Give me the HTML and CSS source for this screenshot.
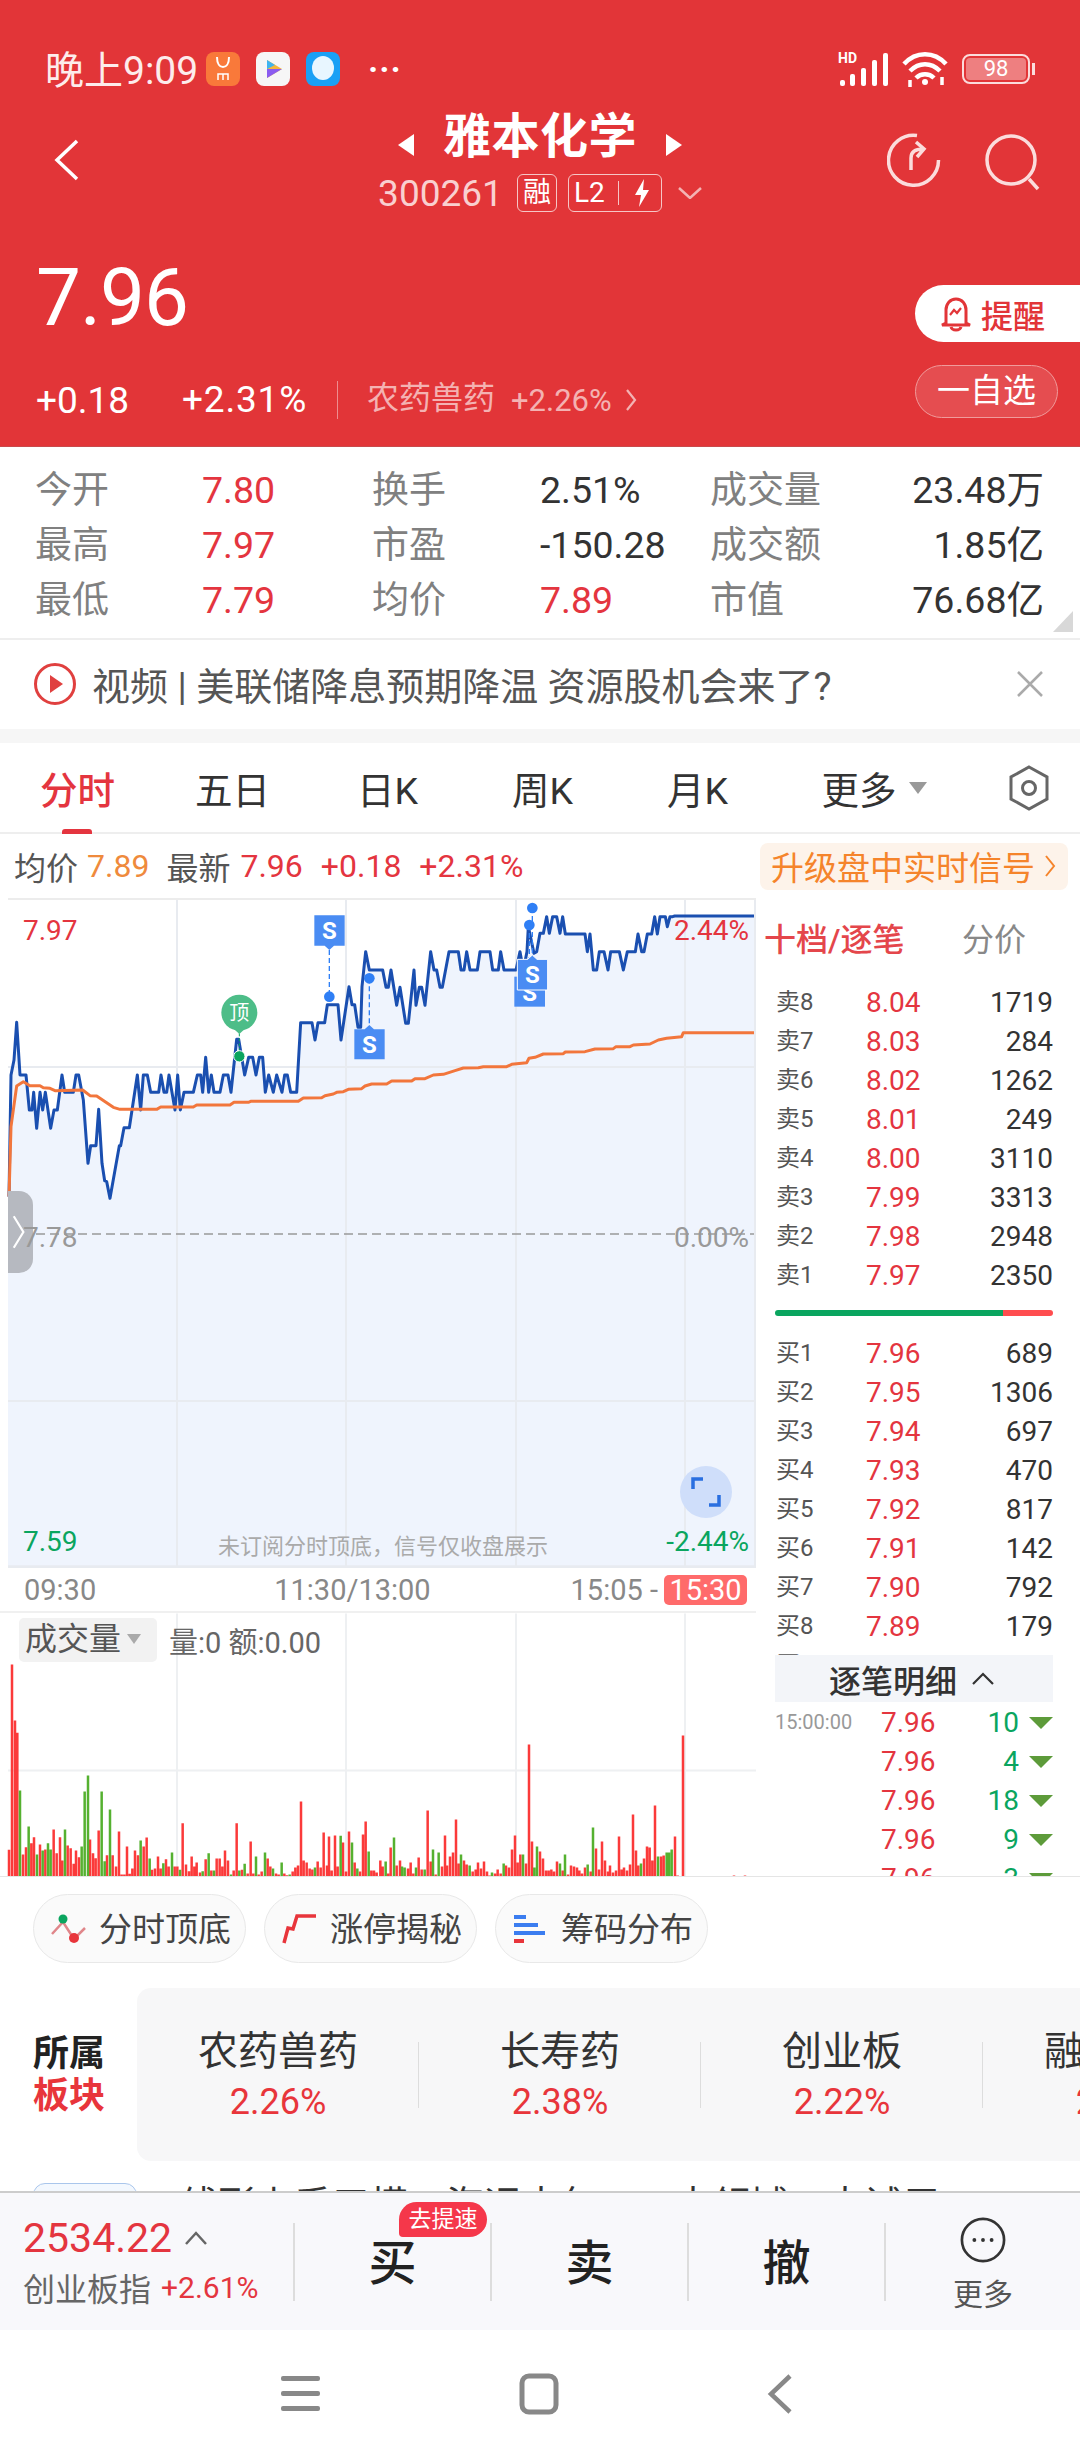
FILE: index.html
```html
<!DOCTYPE html>
<html lang="zh-CN">
<head>
    <meta charset="UTF-8">
    <meta name="viewport" content="width=device-width, initial-scale=1.0">
    <title>雅本化学 300261</title>
    <link rel="stylesheet" href="styles.css">
</head>
<body>
    <header class="top">
        <div class="status">
            <span class="clock">晚上9:09</span>
            <span class="app app-mi"><svg viewBox="0 0 34 34" width="34" height="34"><path d="M11 5c0 7 3 10 6 10s6-3 6-10" fill="none" stroke="#fff" stroke-width="2"/><path d="M12 28v-6h10v6M17 22v6" fill="none" stroke="#fff" stroke-width="1.5"/></svg></span>
            <span class="app app-play"><svg viewBox="0 0 34 34" width="34" height="34"><path d="M11 8l15 9-15 9z" fill="#f5b63d"/><path d="M11 17l15 0-15 9z" fill="#8a5cf0"/><path d="M11 8l8 5-8 4z" fill="#3fb4f0"/></svg></span>
            <span class="app app-blue"><svg viewBox="0 0 34 34" width="34" height="34"><ellipse cx="17" cy="16" rx="11" ry="12" fill="#e8f6ff"/></svg></span>
            <span class="status-dots">···</span>
            <span class="status-right">
                <svg viewBox="0 0 50 40" width="50" height="40"><text x="0" y="14" class="hd">HD</text><g fill="#fff"><rect x="2" y="31" width="5" height="6" rx="2"/><rect x="12" y="25" width="5" height="12" rx="2"/><rect x="23" y="19" width="5" height="18" rx="2"/><rect x="34" y="11" width="5" height="26" rx="2"/><rect x="45" y="4" width="5" height="33" rx="2"/></g></svg>
                <svg viewBox="0 0 48 40" width="48" height="40" fill="none" stroke="#fff" stroke-width="4.5"><path d="M3 15c12-13 30-13 42 0M9 22c9-9 21-9 30 0M15 29c5-5 13-5 18 0"/><circle cx="24" cy="33" r="3" fill="#fff" stroke="none"/><path d="M9 31v7M41 28v8" stroke-width="3.5"/></svg>
                <span class="battery"><span class="battery-level">98</span></span>
            </span>
        </div>
        <div class="titlebar">
            <svg class="back" viewBox="0 0 28 44" width="28" height="44" fill="none" stroke="#fff" stroke-width="3.5"><path d="M25 3L5 22l20 19"/></svg>
            <div class="title-wrap">
                <div class="title-row">
                    <i class="tri tri-l"></i>
                    <span class="name">雅本化学</span>
                    <i class="tri tri-r"></i>
                </div>
                <div class="code-row">
                    <span class="code">300261</span>
                    <span class="tag tag-rong">融</span>
                    <span class="tag tag-l2">L2<i class="tag-line"></i><svg viewBox="0 0 18 30" width="18" height="30"><path d="M11 1L2 17h6l-2 12 10-17h-6z" fill="#fff"/></svg></span>
                    <svg viewBox="0 0 24 12" width="24" height="12" fill="none" stroke="#f3b3b3" stroke-width="2.5"><path d="M1 1l11 10L23 1"/></svg>
                </div>
            </div>
            <div class="title-icons">
                <svg viewBox="0 0 54 54" width="54" height="54" fill="none" stroke="#fbdcdc" stroke-width="3.5"><path d="M30 2.5A25 25 0 1 0 51.5 27"/><path d="M24 37V25c0-6 4-9 12-9M29 9l8 7-7 8"/></svg>
                <svg viewBox="0 0 56 58" width="56" height="58" fill="none" stroke="#fbdcdc" stroke-width="3.5"><circle cx="26" cy="27" r="24"/><path d="M44 46l9 10"/></svg>
            </div>
        </div>
        <div class="quote">
            <div class="quote-left">
                <div class="price">7.96</div>
                <div class="change">
                    <span class="chg-a">+0.18</span>
                    <span class="chg-b">+2.31%</span>
                    <span class="chg-sector">农药兽药</span>
                    <span class="chg-pct">+2.26%</span>
                    <svg viewBox="0 0 12 24" width="12" height="24" fill="none" stroke="#f3b3b3" stroke-width="2.2"><path d="M2 2l8 10L2 22"/></svg>
                </div>
            </div>
            <div class="quote-right">
                <div class="remind">
                    <svg viewBox="0 0 34 36" width="34" height="36" fill="none" stroke="#e23538" stroke-width="3"><path d="M7 27V14C7 8 11 3 17 3s10 5 10 11v13l4 2H3zM12 31c1 4 9 4 10 0"/><path d="M11 19l4-5 3 3 4-5" stroke-width="2.2"/></svg>
                    提醒
                </div>
                <div class="watch">一自选</div>
            </div>
        </div>
    </header>

    <section class="stats">
        <span class="lbl">今开</span><span class="up">7.80</span><span class="lbl">换手</span><span>2.51%</span><span class="lbl">成交量</span><span class="end">23.48万</span>
        <span class="lbl">最高</span><span class="up">7.97</span><span class="lbl">市盈</span><span>-150.28</span><span class="lbl">成交额</span><span class="end">1.85亿</span>
        <span class="lbl">最低</span><span class="up">7.79</span><span class="lbl">均价</span><span class="up">7.89</span><span class="lbl">市值</span><span class="end">76.68亿</span>
        <i class="corner"></i>
    </section>

    <section class="news">
        <svg viewBox="0 0 44 44" width="44" height="44"><circle cx="22" cy="22" r="19.5" fill="none" stroke="#e0403f" stroke-width="3"/><path d="M17 13l13 9-13 9z" fill="#e0403f"/></svg>
        <span class="news-text">视频 | 美联储降息预期降温 资源股机会来了?</span>
        <svg class="news-close" viewBox="0 0 28 28" width="28" height="28" fill="none" stroke="#aaa" stroke-width="2.5"><path d="M2 2l24 24M26 2L2 26"/></svg>
    </section>
    <div class="band"></div>

    <nav class="tabs">
        <span class="tab tab-on">分时</span>
        <span class="tab">五日</span>
        <span class="tab">日K</span>
        <span class="tab">周K</span>
        <span class="tab">月K</span>
        <span class="tab">更多<i class="tab-caret"></i></span>
        <svg class="tab-gear" viewBox="0 0 42 46" width="42" height="46" fill="none" stroke="#666" stroke-width="3"><path d="M21 2l18 10v22L21 44 3 34V12z"/><circle cx="21" cy="23" r="6.5"/></svg>
    </nav>

    <div class="info">
        <span class="info-lbl">均价</span>
        <span class="info-avg">7.89</span>
        <span class="info-lbl info-new">最新</span>
        <span class="up">7.96</span>
        <span class="up">+0.18</span>
        <span class="up">+2.31%</span>
        <span class="signal">升级盘中实时信号<svg viewBox="0 0 12 24" width="12" height="24" fill="none" stroke="#f5842b" stroke-width="2"><path d="M2 2l8 10L2 22"/></svg></span>
    </div>

    <main class="main">
        <div class="charts">
            <div class="price-chart">
                <svg class="chart-svg" viewBox="0 0 2268 2004">
                    <path id="area" fill="#eff4fd"/>
                    <g stroke="#e8ebf0" stroke-width="6">
                        <path d="M531 0V2004M1038 0V2004M1548 0V2004M2055 0V2004M24 501H2268M24 1503H2268"/>
                    </g>
                    <path d="M24 1002H2268" stroke="#999" stroke-width="5" stroke-dasharray="27 15"/>
                    <path id="price-line" fill="none" stroke="#1a4fb0" stroke-width="9" stroke-linejoin="round"/>
                    <path id="avg-line" fill="none" stroke="#f2763c" stroke-width="9" stroke-linejoin="round"/>

                    <path d="M718 400V468" stroke="#0aa55f" stroke-width="3" stroke-dasharray="9 6"/>
                    <circle cx="718" cy="338" r="54" fill="#4dbd88"/>
                    <path d="M696 382h44l-22 20z" fill="#4dbd88"/>
                    <text x="718" y="360" class="pin-text">顶</text>
                    <circle cx="718" cy="469" r="17" fill="#0aa55f" stroke="#fff" stroke-width="3"/>

                    <path d="M988 150V290M1108 235V378M1588 75V230M1597 24V165" stroke="#2f7ff5" stroke-width="4" stroke-dasharray="15 9"/>
                    <circle cx="988" cy="290" r="16" fill="#2f7ff5"/>
                    <circle cx="1108" cy="235" r="16" fill="#2f7ff5"/>
                    <circle cx="1588" cy="75" r="16" fill="#2f7ff5"/>
                    <circle cx="1597" cy="24" r="16" fill="#2f7ff5"/>

                    <g class="flag"><path d="M943 46h91v91h-32l-14 13-14-13h-31z"/><text x="988" y="116">S</text></g>
                    <g class="flag"><path d="M1063 388h31l14-13 14 13h32v90h-91z"/><text x="1108" y="458">S</text></g>
                    <g class="flag"><path d="M1543 230h92v90h-92z"/><text x="1589" y="304">S</text></g>
                    <g class="flag flag-top"><path d="M1552 178h31l14-13 14 13h32v92h-91z"/><text x="1597" y="250">S</text></g>

                    <path d="M24 2000H2268" stroke="#e8ebf0" stroke-width="8"/>
                    <path d="M2265 0V2004" stroke="#e8ebf0" stroke-width="6"/>
                </svg>
                <span class="handle"><svg viewBox="0 0 16 40" width="14" height="38" fill="none" stroke="#fff" stroke-width="2.5"><path d="M2 2l11 18L2 38"/></svg></span>
                <span class="tag-price tp-top">7.97</span>
                <span class="tag-pct tp-top">2.44%</span>
                <span class="tag-price tp-mid">7.78</span>
                <span class="tag-pct tp-mid">0.00%</span>
                <span class="tag-price tp-low">7.59</span>
                <span class="tag-pct tp-low">-2.44%</span>
                <span class="chart-note">未订阅分时顶底，信号仅收盘展示</span>
                <span class="expand"><svg viewBox="0 0 30 30" width="30" height="30" fill="none" stroke="#2a6fe0" stroke-width="3.5"><path d="M2 12V2h10M28 18v10H18"/></svg></span>
            </div>
            <div class="axis">
                <span>09:30</span>
                <span class="axis-mid">11:30/13:00</span>
                <span class="axis-end">15:05 -</span>
                <span class="axis-badge">15:30</span>
            </div>
            <div class="volume">
                <svg class="chart-svg" viewBox="0 -111 2268 789">
                    <path d="M531 -111V678M1038 -111V678M1548 -111V678M2055 -111V678M24 360H2268" stroke="#eef0f2" stroke-width="6"/>
                    <path id="red-bars" stroke="#fb3a3a" stroke-width="7.5" fill="none"/>
                    <path id="green-bars" stroke="#55b130" stroke-width="7.5" fill="none"/>
                </svg>
                <div class="vol-head">
                    <span class="vol-select">成交量<i class="vol-caret"></i></span>
                    <span class="vol-text">量:0 额:0.00</span>
                </div>
            </div>
        </div>

        <aside class="book">
            <div class="book-tabs">
                <span class="book-on">十档/逐笔</span>
                <span class="book-off">分价</span>
            </div>
            <div class="row"><span class="row-lbl">卖8</span><span class="up">8.04</span><span class="qty">1719</span></div>
            <div class="row"><span class="row-lbl">卖7</span><span class="up">8.03</span><span class="qty">284</span></div>
            <div class="row"><span class="row-lbl">卖6</span><span class="up">8.02</span><span class="qty">1262</span></div>
            <div class="row"><span class="row-lbl">卖5</span><span class="up">8.01</span><span class="qty">249</span></div>
            <div class="row"><span class="row-lbl">卖4</span><span class="up">8.00</span><span class="qty">3110</span></div>
            <div class="row"><span class="row-lbl">卖3</span><span class="up">7.99</span><span class="qty">3313</span></div>
            <div class="row"><span class="row-lbl">卖2</span><span class="up">7.98</span><span class="qty">2948</span></div>
            <div class="row"><span class="row-lbl">卖1</span><span class="up">7.97</span><span class="qty">2350</span></div>
            <div class="ratio"><i class="ratio-green"></i><i class="ratio-red"></i></div>
            <div class="buys">
                <div class="row"><span class="row-lbl">买1</span><span class="up">7.96</span><span class="qty">689</span></div>
                <div class="row"><span class="row-lbl">买2</span><span class="up">7.95</span><span class="qty">1306</span></div>
                <div class="row"><span class="row-lbl">买3</span><span class="up">7.94</span><span class="qty">697</span></div>
                <div class="row"><span class="row-lbl">买4</span><span class="up">7.93</span><span class="qty">470</span></div>
                <div class="row"><span class="row-lbl">买5</span><span class="up">7.92</span><span class="qty">817</span></div>
                <div class="row"><span class="row-lbl">买6</span><span class="up">7.91</span><span class="qty">142</span></div>
                <div class="row"><span class="row-lbl">买7</span><span class="up">7.90</span><span class="qty">792</span></div>
                <div class="row"><span class="row-lbl">买8</span><span class="up">7.89</span><span class="qty">179</span></div>
                <div class="row"><span class="row-lbl">买9</span><span class="up">7.88</span><span class="qty">364</span></div>
            </div>
            <div class="detail-head">逐笔明细<svg viewBox="0 0 24 14" width="24" height="14" fill="none" stroke="#333" stroke-width="2.2"><path d="M2 12L12 2l10 10"/></svg></div>
            <div class="trade"><span class="trade-time">15:00:00</span><span class="up">7.96</span><span class="trade-qty">10</span><i class="trade-tri"></i></div>
            <div class="trade"><span class="trade-time"></span><span class="up">7.96</span><span class="trade-qty">4</span><i class="trade-tri"></i></div>
            <div class="trade"><span class="trade-time"></span><span class="up">7.96</span><span class="trade-qty">18</span><i class="trade-tri"></i></div>
            <div class="trade"><span class="trade-time"></span><span class="up">7.96</span><span class="trade-qty">9</span><i class="trade-tri"></i></div>
            <div class="trade"><span class="trade-time"></span><span class="up">7.96</span><span class="trade-qty">3</span><i class="trade-tri"></i></div>
        </aside>
    </main>

    <div class="chips">
        <span class="chip">
            <svg viewBox="0 0 36 30" width="36" height="30" fill="none"><path d="M1 20L12 8l11 17 11-11" stroke="#e0868a" stroke-width="2.5"/><circle cx="12" cy="5" r="4.5" fill="#0aa55f"/><circle cx="23" cy="24" r="5" fill="#e8353b"/></svg>
            <span class="chip-text">分时顶底</span>
        </span>
        <span class="chip">
            <svg viewBox="0 0 36 30" width="36" height="30" fill="none" stroke="#e8353b" stroke-width="3.5"><path d="M2 29L6 14l5 1 4-13h19"/></svg>
            <span class="chip-text">涨停揭秘</span>
        </span>
        <span class="chip">
            <svg viewBox="0 0 36 30" width="36" height="30"><rect x="1" y="1" width="12" height="4" fill="#3b7df0"/><rect x="1" y="9" width="24" height="4" fill="#3b7df0"/><rect x="1" y="17" width="31" height="4" fill="#3b7df0"/><rect x="1" y="25" width="10" height="4" fill="#e8353b"/></svg>
            <span class="chip-text">筹码分布</span>
        </span>
    </div>

    <section class="sector">
        <div class="sector-title"><span>所属</span><span class="up">板块</span></div>
        <div class="sector-list">
            <div class="sector-item"><span class="sector-name">农药兽药</span><span class="sector-pct">2.26%</span></div>
            <div class="sector-item"><span class="sector-name">长寿药</span><span class="sector-pct">2.38%</span></div>
            <div class="sector-item"><span class="sector-name">创业板</span><span class="sector-pct">2.22%</span></div>
            <div class="sector-item"><span class="sector-name">融资融券</span><span class="sector-pct">2.05%</span></div>
        </div>
    </section>

    <div class="peek">
        <span class="peek-thumb"></span>
        <span class="peek-text">线形上手五模：海运大包，一大领域一大试用</span>
    </div>

    <section class="bar">
        <div class="index">
            <div class="index-top"><span class="index-num">2534.22</span><svg viewBox="0 0 24 14" width="24" height="14" fill="none" stroke="#666" stroke-width="2.5"><path d="M2 13L12 2l10 11"/></svg></div>
            <div class="index-low"><span class="index-name">创业板指</span><span class="index-pct">+2.61%</span></div>
        </div>
        <div class="trade-btn"><span class="trade-glyph">买</span><span class="speed">去提速</span></div>
        <div class="trade-btn"><span class="trade-glyph">卖</span></div>
        <div class="trade-btn"><span class="trade-glyph">撤</span></div>
        <div class="more">
            <svg viewBox="0 0 48 48" width="46" height="46" fill="none"><circle cx="24" cy="24" r="22" stroke="#333" stroke-width="2.8"/><circle cx="15" cy="24" r="2" fill="#333"/><circle cx="24" cy="24" r="2" fill="#333"/><circle cx="33" cy="24" r="2" fill="#333"/></svg>
            <span>更多</span>
        </div>
    </section>

    <footer class="nav">
        <svg viewBox="0 0 40 38" width="40" height="38" fill="#888"><rect y="1" width="39" height="5" rx="2"/><rect y="16" width="39" height="5" rx="2"/><rect y="31" width="39" height="5" rx="2"/></svg>
        <svg class="nav-home" viewBox="0 0 40 42" width="40" height="42" fill="none" stroke="#888" stroke-width="5"><rect x="3" y="3" width="34" height="36" rx="7"/></svg>
        <svg class="nav-back" viewBox="0 0 26 42" width="26" height="42" fill="none" stroke="#888" stroke-width="4.5"><path d="M23 3L4 21l19 18"/></svg>
    </footer>

    <script src="chart.js"></script>
</body>
</html>
```

FILE: styles.css
```css
* {
    box-sizing: border-box;
}

body {
    font-family: Roboto, "Noto Sans CJK SC", sans-serif;
    background-color: #fff;
    color: #333;
    width: 1080px;
    height: 2460px;
    margin: 0;
    overflow: hidden;
    display: flex;
    flex-direction: column;
}

i {
    display: block;
}

.up {
    color: #e4353f;
}

/* red header */
.top {
    height: 447px;
    flex: none;
    background-color: #e23538;
    color: #fff;
    border-bottom: 1px solid #c9494b;
}

.status {
    height: 92px;
    padding: 46px 50px 0 45px;
    display: flex;
    align-items: center;
}

.clock {
    font-size: 39px;
    width: 161px;
    margin-top: -4px;
    color: #fdecec;
}

.app {
    width: 34px;
    height: 34px;
    border-radius: 8px;
    margin-right: 16px;
    display: block;
}

.app svg {
    display: block;
}

.app-mi {
    background-color: #f9793a;
}

.app-play {
    background-color: #f6f6f6;
}

.app-blue {
    background-color: #1aa0f5;
}

.status-dots {
    font-size: 34px;
    font-weight: 700;
    margin-left: 12px;
    letter-spacing: 1px;
}

.status-right {
    margin-left: auto;
    display: flex;
    align-items: center;
    gap: 13px;
}

.status-right svg {
    display: block;
}

.hd {
    font-family: Roboto, sans-serif;
    font-size: 14px;
    font-weight: 700;
    fill: #fff;
}

.battery {
    width: 68px;
    height: 30px;
    border: 2.5px solid #fbdcdc;
    border-radius: 8px;
    padding: 2px;
    position: relative;
}

.battery::after {
    content: "";
    position: absolute;
    right: -7px;
    top: 7px;
    width: 3px;
    height: 12px;
    background-color: #fbdcdc;
}

.battery-level {
    display: block;
    height: 100%;
    background-color: #ee7f80;
    border-radius: 4px;
    font-size: 22px;
    line-height: 21px;
    text-align: center;
}

.titlebar {
    height: 134px;
    display: grid;
    grid-template-columns: 1fr auto 1fr;
}

.back {
    margin: 46px 0 0 52px;
}

.title-wrap {
    display: flex;
    flex-direction: column;
    align-items: center;
}

.title-row {
    margin-top: 17px;
    height: 56px;
    display: flex;
    align-items: center;
    gap: 29px;
}

.name {
    font-size: 48px;
    font-weight: 700;
    line-height: 56px;
    letter-spacing: 0.5px;
}

.tri {
    width: 0;
    height: 0;
    margin-top: 16px;
    border-top: 11px solid transparent;
    border-bottom: 11px solid transparent;
}

.tri-l {
    border-right: 16px solid #fff;
}

.tri-r {
    border-left: 16px solid #fff;
}

.code-row {
    margin-top: 9px;
    height: 38px;
    display: flex;
    align-items: center;
}

.code {
    font-size: 37px;
    color: #f9d0d0;
    margin-right: 14px;
}

.tag {
    height: 38px;
    border: 1.5px solid #f6c6c6;
    border-radius: 6px;
    font-size: 28px;
    line-height: 34px;
    display: flex;
    align-items: center;
}

.tag-rong {
    width: 40px;
    justify-content: center;
    margin-right: 11px;
}

.tag-l2 {
    width: 94px;
    padding-left: 5px;
    margin-right: 16px;
}

.tag-line {
    width: 1.5px;
    height: 24px;
    background-color: #f6c6c6;
    margin: 0 14px 0 13px;
}

.title-icons {
    display: flex;
    justify-content: flex-end;
    gap: 44px;
    padding: 41px 39px 0 0;
    align-items: flex-start;
}

.quote {
    height: 220px;
    display: flex;
    justify-content: space-between;
}

.quote-left {
    padding: 32px 0 0 36px;
}

.price {
    font-size: 80px;
    line-height: 80px;
    font-weight: 400;
    height: 80px;
    letter-spacing: -1px;
}

.change {
    margin-top: 43px;
    height: 38px;
    display: flex;
    align-items: center;
}

.chg-a {
    font-size: 37px;
    width: 146px;
}

.chg-b {
    font-size: 37px;
    letter-spacing: 0.8px;
    width: 156px;
    border-right: 1.5px solid #ee8d8f;
    line-height: 38px;
}

.chg-sector {
    font-size: 32px;
    line-height: 34px;
    margin-top: -4px;
    color: #f4b2b2;
    margin-left: 29px;
    width: 144px;
}

.chg-pct {
    font-size: 31px;
    color: #f4b2b2;
    width: 114px;
}

.quote-right {
    padding-top: 59px;
    display: flex;
    flex-direction: column;
    align-items: flex-end;
}

.remind {
    width: 165px;
    height: 57px;
    background-color: #fff;
    border-radius: 29px 0 0 29px;
    color: #e23538;
    font-size: 32px;
    font-weight: 500;
    display: flex;
    align-items: center;
    gap: 8px;
    padding-left: 24px;
}

.watch {
    width: 143px;
    height: 53px;
    margin: 23px 22px 0 0;
    border: 1.5px solid #f09b9b;
    border-radius: 27px;
    background-color: rgba(255, 255, 255, 0.12);
    font-size: 33px;
    line-height: 50px;
    text-align: center;
}

/* stats */
.stats {
    height: 193px;
    flex: none;
    padding: 16px 36px 0 35px;
    border-bottom: 2px solid #eee;
    display: grid;
    grid-template-columns: 167px 170px 168px 170px auto 1fr;
    grid-auto-rows: 55px;
    align-items: center;
    font-size: 37.5px;
    line-height: 55px;
    color: #333;
    position: relative;
}

.lbl {
    color: #808080;
    font-size: 37px;
}

.end {
    text-align: right;
}

.corner {
    position: absolute;
    right: 7px;
    bottom: 6px;
    width: 20px;
    height: 21px;
    background-color: #d8d8d8;
    clip-path: polygon(100% 0, 100% 100%, 0 100%);
}

/* news */
.news {
    height: 89px;
    flex: none;
    padding: 0 36px 2px 33px;
    display: flex;
    align-items: center;
}

.news-text {
    font-size: 38px;
    color: #555;
    margin-left: 15px;
}

.news-close {
    margin-left: auto;
}

.band {
    height: 14px;
    flex: none;
    background-color: #f6f6f6;
}

/* tabs */
.tabs {
    height: 91px;
    flex: none;
    display: grid;
    grid-template-columns: repeat(6, 155px) 1fr;
    align-items: center;
    border-bottom: 2px solid #eee;
    font-size: 37.5px;
    color: #333;
    position: relative;
}

.tab {
    text-align: center;
    display: flex;
    align-items: center;
    justify-content: center;
}

.tab-on {
    color: #e4353f;
    font-weight: 500;
}

.tab-on::after {
    content: "";
    position: absolute;
    left: 62px;
    bottom: -2px;
    width: 30px;
    height: 5px;
    background-color: #e4353f;
    border-radius: 3px 3px 0 0;
}

.tab:nth-child(6) {
    padding-left: 13px;
}

.tab-caret {
    width: 0;
    height: 0;
    margin: 0 -30px 0 12px;
    border-left: 9px solid transparent;
    border-right: 9px solid transparent;
    border-top: 12px solid #999;
}

.tab-gear {
    margin-left: 78px;
}

/* info line */
.info {
    height: 64px;
    flex: none;
    padding: 0 12px 0 14px;
    display: flex;
    align-items: center;
    font-size: 32px;
}

.info-lbl {
    color: #555;
}

.info-avg {
    color: #ef8a3c;
    margin: 0 17px 0 9px;
}

.info-new {
    margin-right: 10px;
}

.info .up {
    margin-right: 18px;
}

.signal {
    margin-left: auto;
    width: 308px;
    height: 47px;
    background-color: #fdf3ea;
    border-radius: 8px;
    color: #f5842b;
    font-size: 33px;
    display: flex;
    align-items: center;
    gap: 9px;
    padding-left: 11px;
}

/* charts + order book */
.main {
    height: 979px;
    flex: none;
    display: flex;
    overflow: hidden;
    border-bottom: 1px solid #e5e5e5;
}

.charts {
    width: 756px;
    flex: none;
}

.price-chart {
    height: 670px;
    border-top: 2px solid #ececec;
    margin-left: 8px;
    position: relative;
}

.chart-svg {
    position: absolute;
    left: -8px;
    top: 0;
    width: 756px;
    height: 100%;
    display: block;
}

.pin-text {
    font-size: 60px;
    fill: #fff;
    text-anchor: middle;
    font-family: "Noto Sans CJK SC", sans-serif;
}

.flag path {
    fill: #4a8cf3;
}

.flag text {
    fill: #fff;
    font-size: 72px;
    font-weight: 700;
    font-family: Roboto, sans-serif;
    text-anchor: middle;
}

.flag-top path {
    stroke: #fff;
    stroke-width: 3;
}

.tag-price,
.tag-pct {
    position: absolute;
    font-size: 28px;
    line-height: 32px;
}

.tag-price {
    left: 15px;
}

.tag-pct {
    right: 7px;
}

.tp-top {
    top: 15px;
    color: #e4353f;
}

.tp-mid {
    top: 322px;
    color: #999;
}

.tp-low {
    top: 626px;
    color: #0aa55f;
}

.chart-note {
    position: absolute;
    left: 210px;
    top: 633px;
    font-size: 22px;
    line-height: 28px;
    color: #aaa;
}

.handle {
    position: absolute;
    left: 0;
    top: 291px;
    width: 25px;
    height: 82px;
    background-color: #b6b9c0;
    border-radius: 0 14px 14px 0;
    display: flex;
    align-items: center;
    padding-left: 4px;
}

.expand {
    position: absolute;
    left: 672px;
    top: 566px;
    width: 52px;
    height: 52px;
    border-radius: 50%;
    background-color: #cfdefa;
    display: flex;
    align-items: center;
    justify-content: center;
}

.axis {
    height: 45px;
    padding: 0 9px 0 24px;
    display: flex;
    align-items: center;
    font-size: 29px;
    color: #888;
    border-bottom: 2px solid #f0f0f0;
}

.axis-mid {
    margin-left: 178px;
}

.axis-end {
    margin-left: auto;
}

.axis-badge {
    margin-left: 6px;
    width: 83px;
    height: 30px;
    background-color: #ff6b6b;
    border-radius: 5px;
    color: #fff;
    line-height: 30px;
    text-align: center;
}

.volume {
    height: 264px;
    position: relative;
}

.volume .chart-svg {
    left: 0;
}

.vol-head {
    position: absolute;
    left: 19px;
    top: 5px;
    display: flex;
    align-items: center;
    gap: 12px;
}

.vol-select {
    width: 138px;
    height: 44px;
    background-color: #f2f2f2;
    border-radius: 5px;
    font-size: 32px;
    line-height: 40px;
    color: #555;
    display: flex;
    align-items: center;
    padding: 0 0 3px 6px;
}

.vol-caret {
    width: 0;
    height: 0;
    margin-left: 6px;
    border-left: 7px solid transparent;
    border-right: 7px solid transparent;
    border-top: 10px solid #aaa;
}

.vol-text {
    font-size: 29px;
    color: #666;
}

.book {
    flex: 1;
    padding-left: 19px;
    overflow: hidden;
}

.book-tabs {
    height: 85px;
    margin-left: -11px;
    padding-top: 21px;
    display: flex;
    font-size: 32px;
    line-height: 42px;
}

.book-on {
    color: #e4464b;
    width: 198px;
    font-weight: 500;
}

.book-off {
    color: #888;
}

.row {
    height: 39px;
    width: 278px;
    display: grid;
    grid-template-columns: 91px 1fr auto;
    align-items: center;
    font-size: 28px;
    line-height: 39px;
}

.row-lbl {
    font-size: 24px;
    color: #555;
    padding-left: 1px;
}

.qty {
    color: #333;
    text-align: right;
}

.ratio {
    width: 278px;
    height: 6px;
    margin: 15px 0 18px;
    display: flex;
    border-radius: 3px;
    overflow: hidden;
}

.ratio-green {
    width: 228px;
    background-color: #0aa55f;
}

.ratio-red {
    flex: 1;
    background-color: #ff4d4f;
}

.buys {
    height: 321px;
    overflow: hidden;
}

.detail-head {
    width: 278px;
    height: 47px;
    background-color: #f3f5f9;
    color: #333;
    font-size: 32px;
    font-weight: 500;
    display: flex;
    align-items: center;
    justify-content: center;
    gap: 14px;
    padding-right: 4px;
}

.trade {
    height: 39px;
    width: 278px;
    display: grid;
    grid-template-columns: 106px 60px 1fr 26px;
    align-items: center;
    font-size: 28px;
    line-height: 39px;
}

.detail-head + .trade {
    margin-top: 1px;
}

.trade-time {
    font-size: 20px;
    color: #999;
}

.trade-qty {
    color: #0aa55f;
    text-align: right;
    padding-right: 8px;
}

.trade-tri {
    width: 0;
    height: 0;
    margin-left: 2px;
    border-left: 12px solid transparent;
    border-right: 12px solid transparent;
    border-top: 12px solid #5d9b3a;
}

/* shortcut chips */
.chips {
    margin-top: 17px;
    height: 69px;
    flex: none;
    padding-left: 33px;
    display: flex;
    gap: 18px;
}

.chip {
    width: 213px;
    height: 69px;
    border: 1.5px solid #e8e8e8;
    border-radius: 35px;
    background-color: #fafafa;
    color: #444;
    font-size: 33px;
    display: flex;
    align-items: center;
    gap: 12px;
    padding-left: 17px;
}

.chip-text {
    margin-top: -4px;
}

/* sector */
.sector {
    margin-top: 25px;
    height: 173px;
    flex: none;
    display: flex;
}

.sector-title {
    width: 137px;
    flex: none;
    padding-left: 33px;
    display: flex;
    flex-direction: column;
    justify-content: center;
    font-size: 36px;
    font-weight: 700;
    line-height: 42px;
    color: #222;
}

.sector-title .up {
    color: #e8353b;
}

.sector-list {
    flex: 1;
    display: flex;
    background-color: #f7f7f8;
    border-radius: 14px 0 0 14px;
    overflow: hidden;
}

.sector-item {
    width: 282px;
    flex: none;
    position: relative;
    display: flex;
    flex-direction: column;
    align-items: center;
    padding-top: 40px;
}

.sector-item::after {
    content: "";
    position: absolute;
    right: 0;
    top: 54px;
    width: 1.5px;
    height: 66px;
    background-color: #ddd;
}

.sector-name {
    font-size: 40px;
    line-height: 48px;
    color: #333;
}

.sector-pct {
    font-size: 36px;
    line-height: 40px;
    margin-top: 6px;
    color: #e8353b;
}

.peek {
    height: 30px;
    flex: none;
    overflow: hidden;
    position: relative;
}

.peek-thumb {
    position: absolute;
    left: 33px;
    top: 22px;
    width: 104px;
    height: 60px;
    border: 1.5px solid #a9c6ec;
    border-radius: 12px;
    background-color: #f3f8fe;
}

.peek-text {
    position: absolute;
    left: 180px;
    top: 20px;
    font-size: 38px;
    line-height: 48px;
    white-space: nowrap;
    color: #333;
}

/* bottom action bar */
.bar {
    height: 139px;
    flex: none;
    background-color: #f8f8fb;
    border-top: 2px solid #ccc;
    display: flex;
    align-items: center;
    position: relative;
}

.index {
    width: 293px;
    flex: none;
    padding-left: 23px;
}

.index-top {
    height: 48px;
    display: flex;
    align-items: center;
    gap: 12px;
}

.index-num {
    font-size: 41px;
    color: #e4353f;
}

.index-low {
    margin-top: 3px;
    height: 44px;
    display: flex;
    align-items: center;
    gap: 10px;
}

.index-name {
    font-size: 32px;
    color: #666;
}

.index-pct {
    font-size: 30px;
    color: #e4353f;
}

.trade-btn {
    width: 197px;
    height: 78px;
    flex: none;
    border-left: 2px solid #ddd;
    font-size: 48px;
    font-weight: 500;
    color: #222;
    display: flex;
    align-items: center;
    justify-content: center;
    position: relative;
}

.trade-glyph {
    margin-top: -6px;
}

.speed {
    position: absolute;
    left: 104px;
    top: -21px;
    width: 88px;
    height: 35px;
    background-color: #f5374a;
    border-radius: 18px 18px 18px 4px;
    color: #fff;
    font-size: 23px;
    font-weight: 400;
    line-height: 35px;
    text-align: center;
}

.more {
    flex: 1;
    height: 78px;
    border-left: 2px solid #ddd;
    display: flex;
    flex-direction: column;
    align-items: center;
    font-size: 30px;
    color: #555;
    line-height: 36px;
}

.more svg {
    margin-top: -6px;
    flex: none;
}

.more span {
    margin-top: 14px;
}

/* android nav */
.nav {
    flex: 1;
    padding: 0 0 2px 281px;
    display: flex;
    align-items: center;
}

.nav-home {
    margin-left: 198px;
}

.nav-back {
    margin-left: 208px;
}
```

FILE: chart.js
```js
// all coordinates are in 3x units of the chart box (x / 3 = px)
const priceLeft = [[27,890],[33,525],[42,480],[50,367],[60,525],[78,525],[88,630],[96,630],[101,577],[110,685],[120,577],[128,630],[136,577],[152,685],[162,630],[172,630],[186,525],[194,577],[220,577],[228,525],[236,525],[250,600],[264,790],[272,737],[288,737],[296,628],[306,790],[314,842],[320,845],[330,895],[358,737],[362,737],[372,683],[388,683],[412,525],[422,630],[430,525],[442,525],[452,577],[476,577],[483,525],[492,577],[500,577],[507,525],[525,630],[533,525],[541,630],[552,577],[580,577],[592,525],[602,525],[608,577],[617,472],[626,577],[634,525],[642,577],[660,577],[670,525],[684,525],[693,577],[710,418],[716,418],[734,525],[746,472],[758,472],[768,525],[778,472],[788,472],[796,577],[806,525],[820,577],[830,525],[846,577],[854,525],[862,525],[872,577],[890,577],[902,368],[936,368],[945,420],[954,368],[974,368],[982,314],[1014,314],[1023,420],[1047,260],[1056,314],[1064,314],[1074,382],[1082,382],[1086,260],[1097,155],[1108,210]];
const priceRight = [[0,210],[8,210],[18,262],[25,262],[33,210],[50,316],[60,262],[77,370],[85,370],[102,210],[108,316],[118,262],[125,262],[135,316],[152,155],[162,210],[170,210],[180,262],[187,262],[207,155],[235,155],[243,210],[252,210],[260,155],[270,210],[292,210],[300,155],[330,155],[338,210],[355,210],[362,155],[372,210],[408,210],[420,155],[430,210],[441,155],[445,80],[462,160],[470,155],[480,100],[490,100],[500,50],[508,100],[518,50],[530,50],[540,100],[548,50],[556,102],[615,102],[622,155],[630,102],[640,210],[650,210],[658,155],[672,155],[684,210],[692,155],[718,155],[730,210],[742,155],[766,155],[774,102],[785,155],[792,155],[802,102],[815,102],[824,50],[832,102],[840,50],[856,50],[862,80],[870,50],[878,50],[884,48],[1128,48]];

const avgLeft = [[27,890],[33,680],[50,558],[70,545],[90,557],[120,557],[130,563],[150,565],[165,572],[248,570],[270,587],[290,588],[340,622],[360,628],[470,628],[482,621],[580,621],[590,615],[690,615],[702,607],[745,607],[752,604],[895,604],[910,594],[965,593],[975,587],[1000,582],[1010,577],[1030,575],[1045,568],[1085,566],[1095,558],[1115,552]];
const avgRight = [[0,552],[20,552],[35,543],[95,543],[105,536],[135,536],[160,525],[190,523],[225,512],[250,504],[295,503],[310,500],[380,500],[395,493],[440,488],[447,475],[465,472],[490,462],[550,461],[556,456],[615,455],[645,447],[700,446],[708,440],[750,440],[760,435],[810,432],[835,420],[860,415],[905,410],[910,398],[1128,398]];

// "x,h" per bar, negative h is a green bar
const volLeft = "27,80 36,636 45,468 52,431 60,-258 69,66 78,88 86,-150 94,100 102,118 111,-66 120,96 128,-78 136,81 144,-100 152,-81 161,141 170,70 180,118 187,48 195,-141 203,93 212,85 221,38 228,78 237,58 245,-90 254,-255 264,-303 270,111 279,70 287,55 296,138 305,-255 314,-46 321,64 330,-201 338,64 348,30 357,135 365,6 373,6 381,90 389,8 397,24 405,78 414,64 422,-108 431,90 440,117 449,-54 456,20 465,24 474,60 482,24 490,-40 498,52 506,30 516,-72 524,30 532,30 540,-20 548,160 558,36 567,16 575,60 583,30 590,42 600,12 608,-16 617,52 626,-70 634,18 642,-18 650,54 659,54 667,30 675,78 684,48 693,-6 701,18 710,160 718,-18 726,20 734,-38 743,9 752,105 760,9 768,-60 776,6 785,15 795,-72 803,54 811,30 819,-24 828,9 836,6 845,-42 853,9 861,4 869,-6 878,15 886,27 894,33 903,225 911,48 920,42 929,24 937,21 945,-27 953,45 962,27 971,132 981,33 987,120 995,18 1005,123 1013,30 1022,-122 1029,102 1038,15 1047,135 1056,-102 1064,42 1072,-24 1080,15 1089,126 1097,165 1106,-75 1114,18 1122,18 1130,12";
const volRight = "1,48 8,30 17,-45 24,9 32,87 42,-117 50,33 60,48 66,-30 74,-27 84,24 92,42 100,9 108,-27 116,57 125,21 134,-21 143,198 152,45 159,-81 167,6 176,-72 186,30 195,123 201,33 210,60 219,72 228,171 236,39 243,-66 252,48 260,36 269,-33 278,15 287,21 294,42 303,24 312,45 321,15 329,3 336,-12 345,9 353,21 362,9 371,-39 378,33 387,27 396,81 405,123 413,42 421,66 429,-66 438,39 447,396 456,105 463,-27 471,-90 480,75 489,54 498,18 506,18 514,21 522,15 531,45 540,-39 548,18 555,-66 564,6 573,33 582,30 591,27 598,18 606,9 615,27 623,-36 632,15 639,-147 648,84 657,21 666,105 675,48 684,15 690,33 699,12 708,18 717,120 725,21 732,27 741,18 750,36 759,186 768,78 775,33 783,-39 792,54 801,90 809,87 817,48 825,213 834,-60 843,60 851,63 860,-72 867,-72 875,-81 885,120 893,3 909,423 1062,3 1095,3";

const RIGHT_OFFSET = 1140;
const BASELINE = 678;

function joinPoints(left, right) {
    return left.concat(right.map(p => [p[0] + RIGHT_OFFSET, p[1]]));
}

function toPath(points) {
    return 'M' + points.map(p => p.join(' ')).join('L');
}

const price = joinPoints(priceLeft, priceRight);
const avg = joinPoints(avgLeft, avgRight);

document.getElementById('price-line').setAttribute('d', toPath(price));
document.getElementById('avg-line').setAttribute('d', toPath(avg));
document.getElementById('area').setAttribute('d', 'M24 2004L24 890L' + toPath(price).slice(1) + 'L2268 48L2268 2004Z');

let redBars = '';
let greenBars = '';

function addBars(data, offset) {
    data.split(' ').forEach(item => {
        const [x, h] = item.split(',').map(Number);
        const seg = `M${x + offset} ${BASELINE}V${BASELINE - Math.abs(h)}`;
        if (h < 0) {
            greenBars += seg;
        } else {
            redBars += seg;
        }
    });
}

addBars(volLeft, 0);
addBars(volRight, RIGHT_OFFSET);

document.getElementById('red-bars').setAttribute('d', redBars);
document.getElementById('green-bars').setAttribute('d', greenBars);
```
